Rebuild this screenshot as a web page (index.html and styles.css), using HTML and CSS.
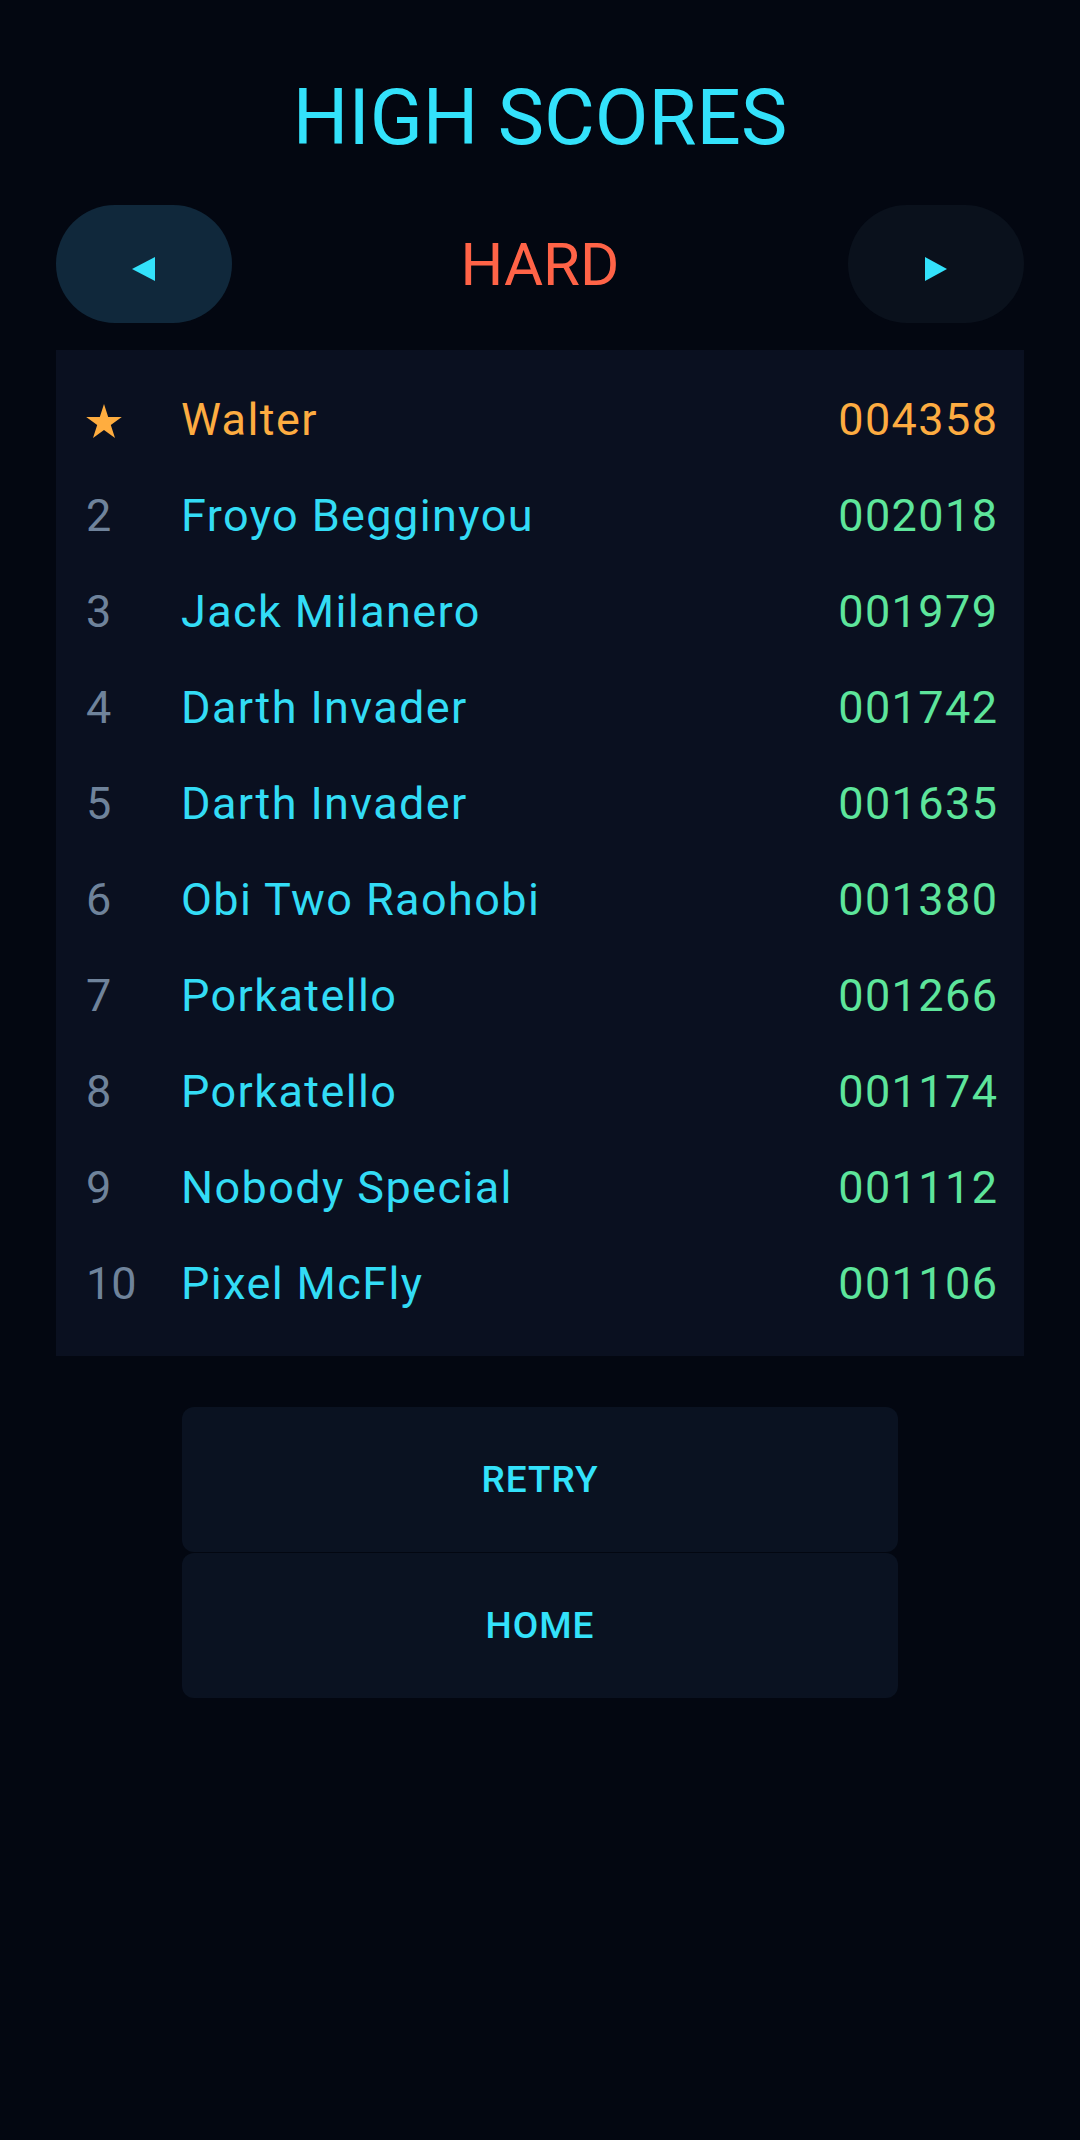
FILE: index.html
```html
<!DOCTYPE html>
<html lang="en">
<head>
  <meta charset="UTF-8">
  <title>High Scores</title>
  <link rel="stylesheet" href="styles.css">
</head>
<body>
  <div class="screen">
    <h1>HIGH SCORES</h1>

    <div class="mode-bar">
      <button class="mode-btn active" aria-label="Previous">
        <svg width="24" height="24" viewBox="0 0 24 24"><polygon points="23,0 23,24 0,12" fill="#33e2fb"/></svg>
      </button>
      <div class="mode-name">HARD</div>
      <button class="mode-btn" aria-label="Next">
        <svg width="24" height="24" viewBox="0 0 24 24"><polygon points="1,0 1,24 23,12" fill="#33e2fb"/></svg>
      </button>
    </div>

    <div class="board">
      <div class="row top">
        <span class="rank">
          <svg width="36" height="35" viewBox="0 0 36 35"><polygon points="18,0 22.2,12.9 35.8,12.9 24.8,20.9 29,34 18,25.9 7,34 11.2,20.9 0.2,12.9 13.8,12.9" fill="#ffad3f"/></svg>
        </span>
        <span class="name">Walter</span>
        <span class="score">004358</span>
      </div>
      <div class="row"><span class="rank">2</span><span class="name">Froyo Begginyou</span><span class="score">002018</span></div>
      <div class="row"><span class="rank">3</span><span class="name">Jack Milanero</span><span class="score">001979</span></div>
      <div class="row"><span class="rank">4</span><span class="name">Darth Invader</span><span class="score">001742</span></div>
      <div class="row"><span class="rank">5</span><span class="name">Darth Invader</span><span class="score">001635</span></div>
      <div class="row"><span class="rank">6</span><span class="name">Obi Two Raohobi</span><span class="score">001380</span></div>
      <div class="row"><span class="rank">7</span><span class="name">Porkatello</span><span class="score">001266</span></div>
      <div class="row"><span class="rank">8</span><span class="name">Porkatello</span><span class="score">001174</span></div>
      <div class="row"><span class="rank">9</span><span class="name">Nobody Special</span><span class="score">001112</span></div>
      <div class="row"><span class="rank">10</span><span class="name">Pixel McFly</span><span class="score">001106</span></div>
    </div>

    <div class="actions">
      <button class="action">RETRY</button>
      <button class="action">HOME</button>
    </div>
  </div>
</body>
</html>
```

FILE: styles.css
```css
html, body {
  margin: 0;
  padding: 0;
}
body {
  font-family: 'Roboto', 'Liberation Sans', sans-serif;
  background-color: #030711;
  min-height: 2140px;
}
.screen {
  padding: 79px 56px 0;
}
h1 {
  margin: 0 0 48px;
  font-size: 78px;
  line-height: 78px;
  font-weight: 400;
  color: #33e2fb;
  text-align: center;
}
.mode-bar {
  display: flex;
  align-items: center;
  justify-content: space-between;
}
.mode-btn {
  width: 176px;
  height: 118px;
  border: none;
  border-radius: 59px;
  background-color: #0a111c;
  display: flex;
  align-items: center;
  justify-content: center;
  padding: 9px 0 0;
  cursor: pointer;
}
.mode-btn.active {
  background-color: #10283b;
}
.mode-name {
  font-size: 60px;
  line-height: 60px;
  color: #ff6347;
  padding-top: 2px;
}
.board {
  margin-top: 27px;
  background-color: #0a1020;
  padding: 21px 27px 25px 30px;
}
.row {
  display: flex;
  align-items: center;
  height: 96px;
  font-size: 45px;
  letter-spacing: 1.4px;
}
.rank {
  width: 95px;
  color: #6f839b;
  display: flex;
  align-items: center;
  letter-spacing: 0;
}
.name {
  flex: 1;
  color: #33dcf5;
}
.score {
  color: #5de59b;
  margin-right: -1.4px;
}
.row.top .name,
.row.top .score {
  color: #fdac41;
}
.row.top .rank svg {
  margin-top: 4px;
}
.actions {
  margin: 51px auto 0;
  width: 716px;
  display: flex;
  flex-direction: column;
  gap: 1px;
}
.action {
  height: 145px;
  border: none;
  border-radius: 12px;
  background-color: #0a1221;
  color: #33e2fb;
  font-family: 'Roboto', 'Liberation Sans', sans-serif;
  font-size: 37px;
  font-weight: 500;
  letter-spacing: 1px;
  cursor: pointer;
}
```
